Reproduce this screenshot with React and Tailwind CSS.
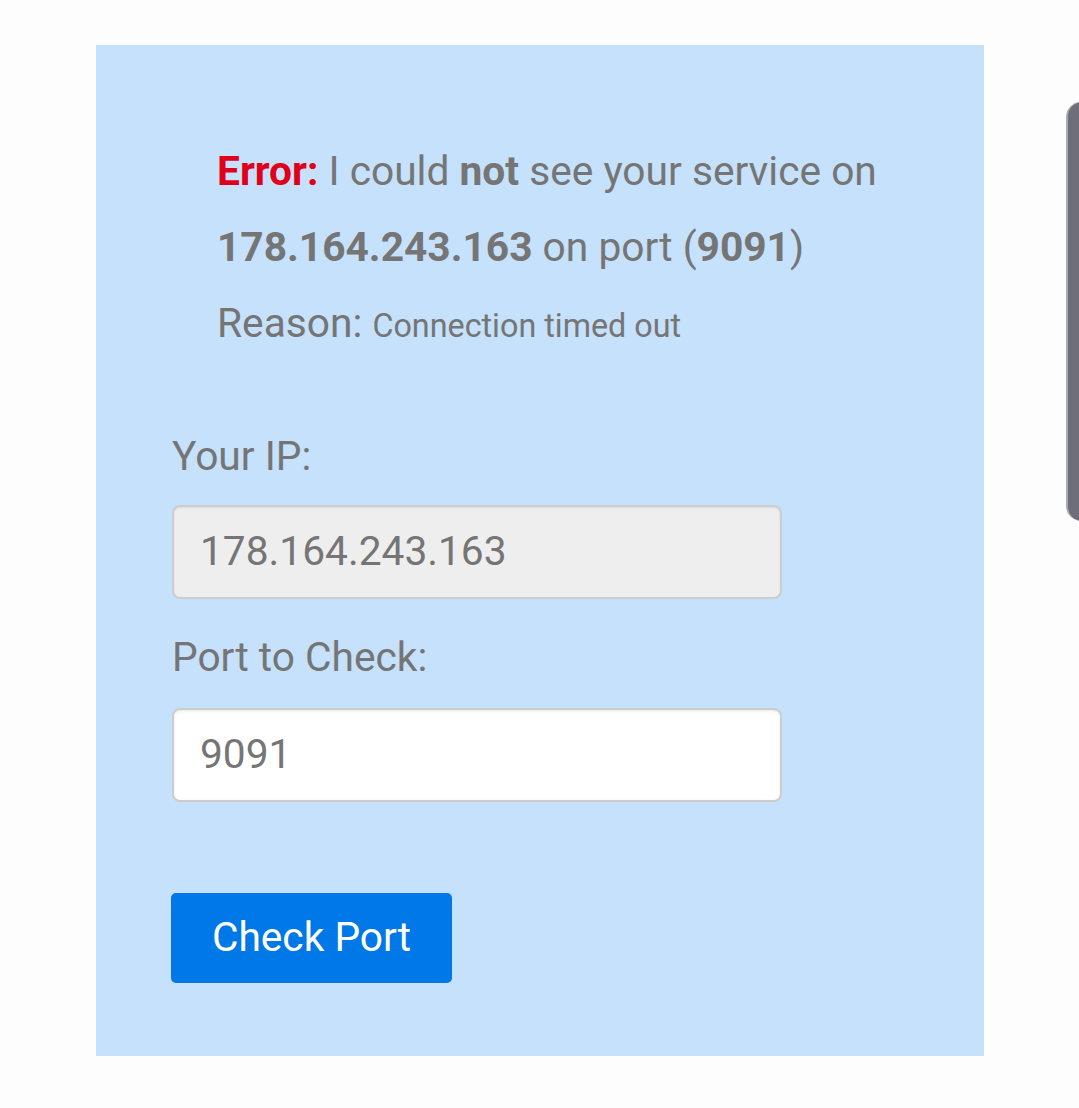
export default function App() {
  return (
    <div className="relative min-h-[1108px] w-[1079px] overflow-hidden bg-[#fdfdfd] pt-[45px] pl-[96px]" style={{ fontFamily: "Roboto, 'Liberation Sans', sans-serif" }}>
      <div className="flex h-[1011px] w-[888px] flex-col bg-[#c5e1fb] pt-[126px] pl-[76px] text-[#757575]">
        <div className="flex flex-col pl-[45px] text-[40.7px] leading-[76px]">
          <p className="-mt-[38px] whitespace-nowrap">
            <span className="font-bold text-[#e0001b]">Error:</span> I could <span className="font-bold">not</span> see your service on
          </p>
          <p className="whitespace-nowrap">
            <span className="font-bold">178.164.243.163</span> on port (<span className="font-bold">9091</span>)
          </p>
          <p className="whitespace-nowrap">
            Reason: <span className="text-[32.3px]">Connection timed out</span>
          </p>
        </div>
        <label className="mt-[70px] text-[40.7px] leading-[44px]">Your IP:</label>
        <div className="mt-[27px] flex h-[94px] w-[610px] items-center rounded-[8px] border-2 border-[#cccccc] bg-[#eeeeee] pl-[26px] text-[40.7px] shadow-[inset_0_1px_2px_rgba(0,0,0,0.08)]">
          178.164.243.163
        </div>
        <label className="mt-[36px] text-[40.7px] leading-[44px]">Port to Check:</label>
        <div className="mt-[29px] flex h-[94px] w-[610px] items-center rounded-[8px] border-2 border-[#cccccc] bg-white pl-[26px] text-[40.7px] shadow-[inset_0_1px_3px_rgba(0,0,0,0.1)]">
          9091
        </div>
        <button className="mt-[91px] -ml-px flex h-[90px] w-[281px] items-center justify-center rounded-[5px] bg-[#0078e7] text-[40.7px] text-white">
          Check Port
        </button>
      </div>
      <div className="absolute top-[102px] left-[1066px] h-[419px] w-[30px] rounded-[16px] border-l-2 border-[#a9a9b1] bg-[#6e6e7a]" />
    </div>
  );
}
